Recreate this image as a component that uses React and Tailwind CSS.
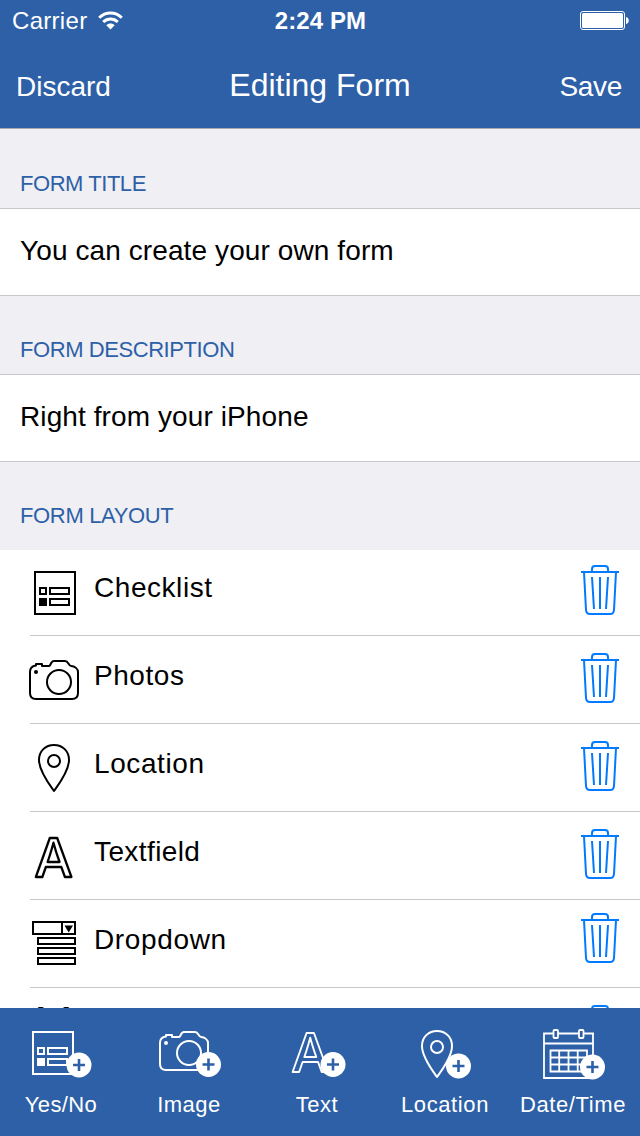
import React from "react";

function ChecklistGlyph() {
  return (
    <g fill="none" stroke="currentColor" strokeWidth="2">
      <rect x="1" y="1" width="40" height="42" />
      <rect x="6" y="17" width="6" height="6" />
      <rect x="16" y="17" width="19" height="6" />
      <rect x="6" y="28" width="6" height="6" fill="currentColor" />
      <rect x="16" y="28" width="19" height="6" />
    </g>
  );
}

function CameraGlyph() {
  return (
    <g fill="none" stroke="currentColor" strokeWidth="2">
      <path d="M7 5.500V4H13V6H20C22 6 21.500 1 25 1H36C39.500 1 39.500 6 42 6C46 6 49 9 49 12V33C49 37 47 39 43 39H7C3 39 1 37 1 33V12C1 8 3 6 7 5.500Z" strokeLinejoin="round" />
      <circle cx="30" cy="22" r="12" />
      <circle cx="7" cy="12" r="2" fill="currentColor" stroke="none" />
    </g>
  );
}

function PinGlyph() {
  return (
    <g fill="none" stroke="currentColor" strokeWidth="2">
      <path d="M16 47C11 40 1 27 1 16C1 7 7.500 1 16 1S31 7 31 16C31 27 21 40 16 47Z" strokeLinejoin="round" />
      <circle cx="16" cy="17" r="6" />
    </g>
  );
}

function LetterGlyph({ weight = 1.8 }) {
  return (
    <text
      x="19"
      y="40.500"
      textAnchor="middle"
      fontFamily="Inter, 'Liberation Sans', sans-serif"
      fontWeight="500"
      fontSize="54"
      fill="none"
      stroke="currentColor"
      strokeWidth={weight}
      strokeLinejoin="round"
    >
      A
    </text>
  );
}

function DropdownGlyph() {
  return (
    <g fill="none" stroke="currentColor" strokeWidth="2">
      <rect x="1" y="1" width="42" height="12" />
      <path d="M30 1V13" />
      <path d="M32.500 4.500H41L36.700 11.500Z" fill="currentColor" stroke="none" />
      <rect x="6" y="17" width="37" height="6" />
      <rect x="6" y="27" width="37" height="6" />
      <rect x="6" y="37" width="37" height="6" />
    </g>
  );
}

function CalendarGlyph() {
  return (
    <g fill="none" stroke="currentColor" strokeWidth="1.800">
      <path d="M10 4.500H1V49H50V4.500H41M15 4.500H36M1 14.500H50" />
      <rect x="10.500" y="1" width="4.500" height="8" rx="1" />
      <rect x="36" y="1" width="4.500" height="8" rx="1" />
      <path d="M7.500 21.500H44V42.500H7.500ZM16.200 21.500V42.500M25.500 21.500V42.500M34.700 21.500V42.500M7.500 28.500H44M7.500 35.500H44" />
    </g>
  );
}

function Trash() {
  return (
    <svg className="block h-[50px] w-[38px]" viewBox="0 0 38 50" fill="none" stroke="#007aff" strokeWidth="2">
      <path d="M0 7H38" />
      <path d="M11 7V4C11 2 12 1 14 1H24C26 1 27 2 27 4V7" />
      <path d="M3 7L5 45C5.200 48 6.500 49 9 49H29C31.500 49 32.800 48 33 45L35 7" />
      <path d="M11 12L13 44M19 12V44M27 12L25 44" />
    </svg>
  );
}

function SectionHeader({ children, className }) {
  return (
    <div className={"flex shrink-0 items-end bg-[#efeff4] pl-5 " + className}>
      <h2 className="text-[22px] leading-6 text-[#2d60a7]">{children}</h2>
    </div>
  );
}

function Field({ children }) {
  return (
    <div className="h-[88px] shrink-0 border-y border-[#c8c7cc] bg-white pt-[26px] pl-5 text-[28px] leading-8 tracking-[0.1px]">
      {children}
    </div>
  );
}

const rows = [
  { label: "Checklist", glyph: <ChecklistGlyph />, x: 34, y: 23, track: "tracking-[0.55px]", trash: "pt-[17px]" },
  { label: "Photos", glyph: <CameraGlyph />, x: 29, y: 24, track: "tracking-[0.55px]", trash: "pt-[17px]" },
  { label: "Location", glyph: <PinGlyph />, x: 38, y: 20, track: "tracking-[0.6px]", trash: "pt-[17px]" },
  { label: "Textfield", glyph: <LetterGlyph weight={2.3} />, x: 34.7, y: 24, track: "tracking-[0.4px]", trash: "pt-[17px]" },
  { label: "Dropdown", glyph: <DropdownGlyph />, x: 32, y: 21, track: "tracking-[0.65px]", trash: "pt-[13px]" },
  { label: "", glyph: <CalendarGlyph />, x: 28, y: 18.8, track: "", trash: "pt-[17px]" },
];

const tools = [
  { label: "Yes/No", glyph: <ChecklistGlyph />, x: 35, y: 23, px: 82, py: 57, track: "tracking-[0.4px]" },
  { label: "Image", glyph: <CameraGlyph />, x: 34, y: 23, px: 83.5, py: 56.5, track: "tracking-[0.5px]" },
  { label: "Text", glyph: <LetterGlyph />, x: 38.5, y: 23, px: 80, py: 56.5, track: "tracking-[0.5px]" },
  { label: "Location", glyph: <PinGlyph />, x: 40, y: 22, px: 77.5, py: 58, track: "tracking-[0.6px]" },
  { label: "Date/Time", glyph: <CalendarGlyph />, x: 34, y: 21, px: 83.5, py: 59, track: "tracking-[0.6px]" },
];

export default function App() {
  return (
    <div className="flex h-[1136px] w-[640px] flex-col overflow-hidden bg-white font-['Liberation_Sans',Arial,sans-serif] text-black">
      <header className="h-[129px] shrink-0 border-b border-[#a9abb0] bg-[#2d60a7] text-white">
        <div className="grid h-10 grid-cols-3 items-center pr-[11px] pl-3">
          <div className="flex items-center gap-[11px]">
            <span className="pt-0.5 text-2xl leading-8 tracking-[0.3px]">Carrier</span>
            <svg className="h-[19px] w-[25px]" viewBox="0 0 25 19" fill="none" stroke="white" strokeWidth="3">
              <path d="M1.200 6.800C7.500 0.500 17.500 0.500 23.800 6.800" />
              <path d="M5.200 11C9.300 7 15.700 7 19.800 11" />
              <path d="M12.500 18.500L8.300 14.200C10.500 12 14.500 12 16.700 14.200Z" fill="white" stroke="none" />
            </svg>
          </div>
          <span className="pt-0.5 text-center text-2xl leading-8 font-bold tracking-[0.1px]">2:24 PM</span>
          <svg className="h-5 w-[49px] justify-self-end" viewBox="0 0 49 20">
            <rect x="0.500" y="1.500" width="44" height="18" rx="2.500" fill="none" stroke="white" />
            <rect x="2" y="3" width="41" height="15" rx="1.500" fill="white" />
            <path d="M46 7C49.700 7.500 49.700 13.500 46 14Z" fill="white" />
          </svg>
        </div>
        <nav className="grid h-[88px] grid-cols-3 pr-[18px] pl-4">
          <span className="pt-[31px] text-[28px] leading-8">Discard</span>
          <h1 className="pt-[27px] pl-0.5 text-center text-[32px] leading-9 whitespace-nowrap">Editing Form</h1>
          <span className="pt-[31px] text-right text-[28px] leading-8 tracking-[-0.3px]">Save</span>
        </nav>
      </header>

      <main className="flex min-h-0 flex-1 flex-col overflow-hidden">
        <SectionHeader className="h-[79px] pb-[12px] tracking-[-0.45px]">FORM TITLE</SectionHeader>
        <Field>You can create your own form</Field>
        <SectionHeader className="h-[78px] pb-[12px] tracking-[-0.43px]">FORM DESCRIPTION</SectionHeader>
        <Field>Right from your iPhone</Field>
        <SectionHeader className="h-[88px] pb-[22px] tracking-[-0.35px]">FORM LAYOUT</SectionHeader>
        <ul className="-mt-0.5">
          {rows.map((r, i) => (
            <li key={i} className="ml-[30px] flex h-[88px] items-start border-b border-[#c8c8c8] pr-[21px]">
              <svg className="h-[87px] w-16 shrink-0 overflow-visible" viewBox="30 0 64 87">
                <g transform={`translate(${r.x} ${r.y})`}>{r.glyph}</g>
              </svg>
              <span className={"flex-1 pt-6 text-[28px] leading-8 " + r.track}>{r.label}</span>
              <span className={r.trash}>
                <Trash />
              </span>
            </li>
          ))}
        </ul>
      </main>

      <footer className="h-[128px] shrink-0 bg-[#2d60a7] text-white">
        <div className="-ml-[3px] flex">
          {tools.map((t) => (
            <div key={t.label} className="flex w-32 shrink-0 flex-col items-center">
              <svg className="h-[83px] w-32" viewBox="0 0 128 83">
                <g transform={`translate(${t.x} ${t.y})`}>{t.glyph}</g>
                <g transform={`translate(${t.px} ${t.py})`}>
                  <circle r="12.500" fill="white" />
                  <path d="M-6 0H6M0 -6V6" stroke="#2d60a7" strokeWidth="2.600" />
                </g>
              </svg>
              <span className={"text-[22px] leading-7 whitespace-nowrap " + t.track}>{t.label}</span>
            </div>
          ))}
        </div>
      </footer>
    </div>
  );
}
